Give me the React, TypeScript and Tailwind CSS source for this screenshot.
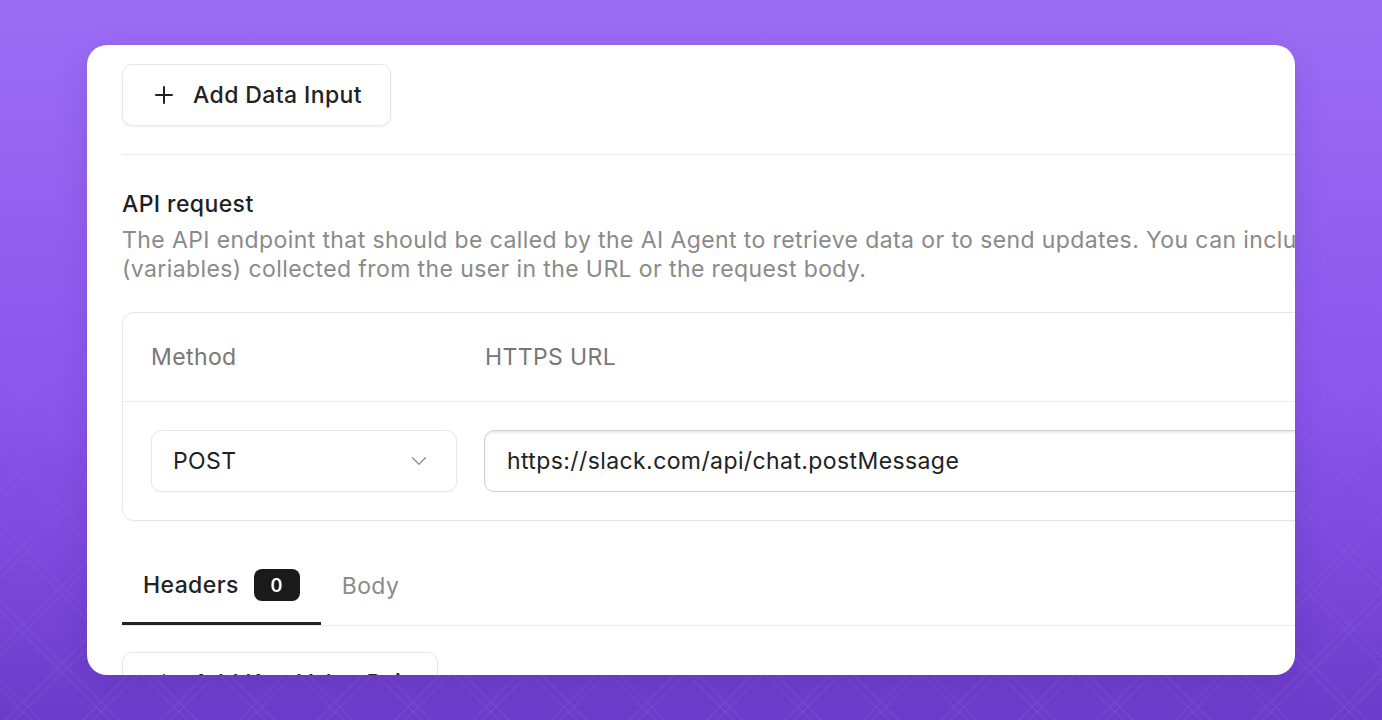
import { ChevronDown } from "lucide-react";

const PlusIcon = () => (
  <svg width="18" height="18" viewBox="0 0 18 18" fill="none">
    <path d="M9 1v16M1 9h16" stroke="#222" strokeWidth="2" strokeLinecap="round" />
  </svg>
);

const Backdrop = () => (
  <svg className="absolute inset-0 w-full h-full" aria-hidden="true">
    <defs>
      <pattern id="diamonds" width="78" height="78" patternUnits="userSpaceOnUse" x="-16" y="0">
        <path d="M0 39 L39 0 L78 39 L39 78 Z" fill="none" stroke="#ffffff" strokeWidth="1.2" />
        <path d="M-39 0 L0 -39 L39 0 L0 39 Z M39 0 L78 -39 L117 0 L78 39 Z M-39 78 L0 39 L39 78 L0 117 Z M39 78 L78 39 L117 78 L78 117 Z" fill="none" stroke="#ffffff" strokeWidth="1.2" transform="translate(0 10)" />
      </pattern>
      <linearGradient id="fade" x1="0" y1="0" x2="0" y2="1">
        <stop offset="0" stopColor="#fff" stopOpacity="0" />
        <stop offset="0.4" stopColor="#fff" stopOpacity="0" />
        <stop offset="1" stopColor="#fff" stopOpacity="1" />
      </linearGradient>
      <mask id="fadeMask">
        <rect width="100%" height="100%" fill="url(#fade)" />
      </mask>
    </defs>
    <rect width="100%" height="100%" fill="url(#diamonds)" opacity="0.07" mask="url(#fadeMask)" />
  </svg>
);

export default function App() {
  return (
    <div
      className="relative h-[720px] w-full overflow-hidden bg-[linear-gradient(180deg,#9b6df4_0%,#8a56ec_55%,#6b3cc9_100%)] tracking-[0.025em]"
      style={{ fontFamily: "Inter, 'Noto Sans', sans-serif" }}
    >
      <Backdrop />

      <div className="relative px-[87px] pt-[45px]">
        {/* Card */}
        <div className="h-[630px] overflow-hidden rounded-[20px] bg-white shadow-[0_8px_30px_rgba(40,10,90,0.12)]">
          <div className="w-[1480px] pl-[35px] pt-[19px]">
            {/* Add Data Input */}
            <button className="flex h-[62px] items-center gap-[20px] rounded-[10px] border border-[#e6e6e6] bg-white pl-[32px] pr-[28px] shadow-[0_1px_3px_rgba(0,0,0,0.06)]">
              <PlusIcon />
              <span className="text-[23px] font-medium text-[#222]">Add Data Input</span>
            </button>

            <div className="mt-[28px] h-px bg-[#ebebeb]" />

            {/* API request */}
            <h2 className="mt-[34px] text-[23px] leading-[30px] font-medium text-[#1f1f1f]">API request</h2>
            <p className="mt-[7px] text-[23px] leading-[29px] text-[#8a8a8a]">
              The API endpoint that should be called by the AI Agent to retrieve data or to send updates. You can include inputs
              <br />
              (variables) collected from the user in the URL or the request body.
            </p>

            {/* Method / URL table */}
            <div className="mt-[28px] rounded-[12px] border border-[#e6e6e6] shadow-[0_1px_3px_rgba(0,0,0,0.04)]">
              <div className="grid h-[89px] grid-cols-[306px_1fr] items-center gap-[28px] border-b border-[#ebebeb] px-[28px]">
                <span className="text-[23px] text-[#777]">Method</span>
                <span className="text-[23px] text-[#777]">HTTPS URL</span>
              </div>
              <div className="grid grid-cols-[306px_1fr] gap-[27px] px-[28px] py-[28px]">
                <div className="flex h-[62px] items-center justify-between rounded-[10px] border border-[#e8e8e8] bg-white pl-[21px] pr-[24px] shadow-[0_1px_2px_rgba(0,0,0,0.04)]">
                  <span className="text-[23px] text-[#222]">POST</span>
                  <ChevronDown size={26} strokeWidth={1.2} className="text-[#8f8f8f]" />
                </div>
                <div className="flex h-[62px] items-center rounded-[10px] border border-[#cfcfcf] bg-white pl-[22px] shadow-[inset_0_2px_2px_rgba(0,0,0,0.08)]">
                  <span className="text-[23px] text-[#222]">https://slack.com/api/chat.postMessage</span>
                </div>
              </div>
            </div>

            {/* Tabs */}
            <div className="mt-[27px] flex border-b border-[#ebebeb]">
              <div className="-mb-px flex h-[77px] items-center gap-[15px] border-b-[3px] border-[#222] px-[21px]">
                <span className="text-[23px] font-medium text-[#222]">Headers</span>
                <span className="flex h-[32px] w-[46px] items-center justify-center rounded-[8px] bg-[#1a1a1a] text-[18px] font-semibold text-white">
                  0
                </span>
              </div>
              <div className="flex h-[77px] items-center px-[21px]">
                <span className="text-[23px] text-[#8a8a8a]">Body</span>
              </div>
            </div>

            {/* Add Key-Value Pair */}
            <button className="mt-[26px] flex h-[62px] w-[316px] items-center gap-[20px] rounded-[10px] border border-[#e6e6e6] bg-white pl-[32px] shadow-[0_1px_3px_rgba(0,0,0,0.06)]">
              <PlusIcon />
              <span className="text-[23px] font-medium text-[#222]">Add Key-Value Pair</span>
            </button>
          </div>
        </div>
      </div>
    </div>
  );
}
